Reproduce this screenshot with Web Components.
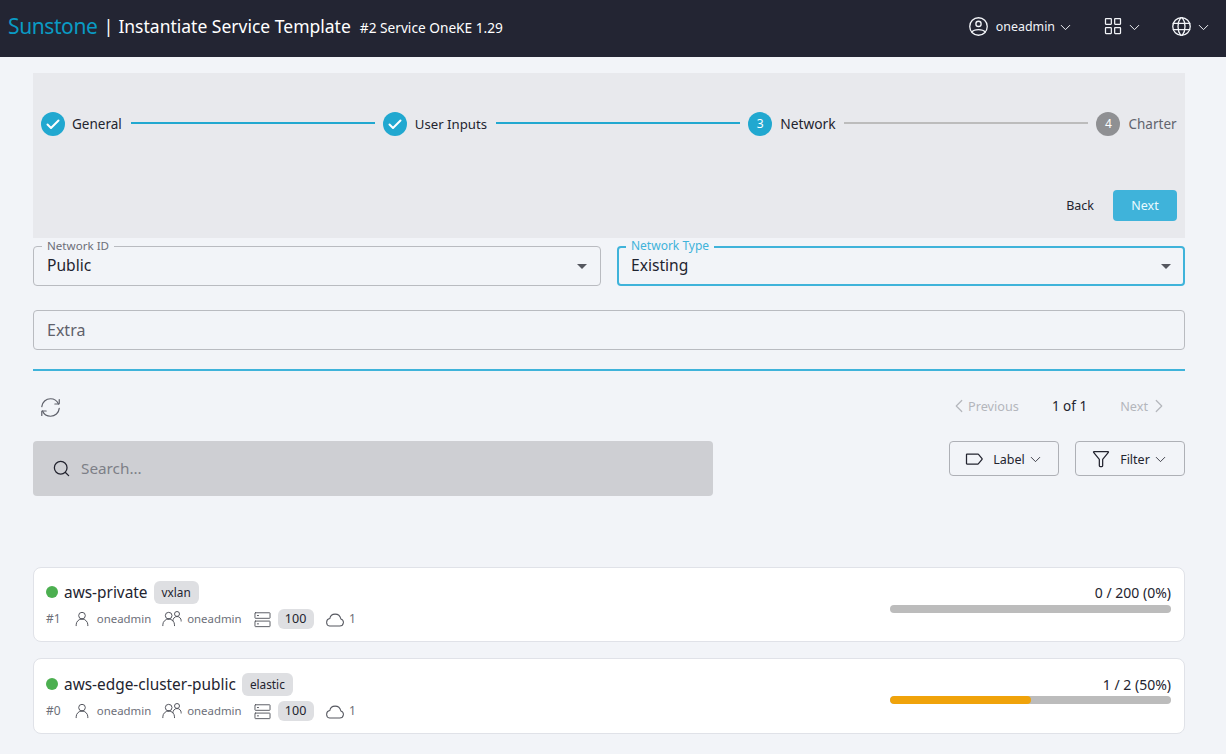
<!DOCTYPE html>
<html lang="en"><head><meta charset="utf-8"><title>Sunstone</title>
<style>
html,body{margin:0;height:100%;background:#f2f4f8;overflow:hidden}
body{font-family:"Noto Sans","Open Sans",sans-serif;color:#1f2430}
</style></head><body>
<sun-app></sun-app>
<script>
const P={
 profile:'<circle cx="12" cy="12" r="10"/><path d="M4.271 18.346S6.5 15.5 12 15.5s7.73 2.846 7.73 2.846M12 12a3 3 0 1 0 0-6 3 3 0 0 0 0 6Z"/>',
 grid:'<path d="M14 20.4v-5.8a.6.6 0 0 1 .6-.6h5.8a.6.6 0 0 1 .6.6v5.8a.6.6 0 0 1-.6.6h-5.8a.6.6 0 0 1-.6-.6ZM3 20.4v-5.8a.6.6 0 0 1 .6-.6h5.8a.6.6 0 0 1 .6.6v5.8a.6.6 0 0 1-.6.6H3.6a.6.6 0 0 1-.6-.6ZM14 9.4V3.6a.6.6 0 0 1 .6-.6h5.8a.6.6 0 0 1 .6.6v5.8a.6.6 0 0 1-.6.6h-5.8a.6.6 0 0 1-.6-.6ZM3 9.4V3.6a.6.6 0 0 1 .6-.6h5.8a.6.6 0 0 1 .6.6v5.8a.6.6 0 0 1-.6.6H3.6a.6.6 0 0 1-.6-.6Z"/>',
 globe:'<circle cx="12" cy="12" r="10"/><path d="M13 2.05S16 6 16 12s-3 9.95-3 9.95M11 21.95S8 18 8 12s3-9.95 3-9.95M2.63 15.5h18.74M2.63 8.5h18.74"/>',
 down:'<path d="M6 9l6 6 6-6"/>',left:'<path d="M15 6l-6 6 6 6"/>',right:'<path d="M9 6l6 6-6 6"/>',
 refresh:'<path d="M21.168 8A10.003 10.003 0 0 0 12 2C6.815 2 2.55 5.947 2.05 11"/><path d="M17 8h4.4a.6.6 0 0 0 .6-.6V3"/><path d="M2.881 16c1.544 3.532 5.068 6 9.168 6 5.186 0 9.45-3.947 9.951-9"/><path d="M7.05 16h-4.4a.6.6 0 0 0-.6.6V21"/>',
 label:'<path d="M3 17.4V6.6a.6.6 0 0 1 .6-.6h13.079a.6.6 0 0 1 .456.21l4.534 5.4a.6.6 0 0 1 0 .78l-4.534 5.4a.6.6 0 0 1-.456.21H3.6a.6.6 0 0 1-.6-.6Z"/>',
 filter:'<path d="M3.6 3h16.8a.6.6 0 0 1 .46.98L14 12.5V20a1 1 0 0 1-1 1h-2a1 1 0 0 1-1-1v-7.5L3.14 3.98A.6.6 0 0 1 3.6 3Z"/>',
 search:'<path d="M17 17l4 4M3 11a8 8 0 1 0 16 0 8 8 0 0 0-16 0Z"/>',
 user:'<path d="M5 20v-1a7 7 0 0 1 14 0v1M12 12a4 4 0 1 0 0-8 4 4 0 0 0 0 8Z"/>',
 group:'<path d="M1 20v-1a7 7 0 0 1 14 0v1M13 14a5 5 0 0 1 10 0v.5M8 12a4 4 0 1 0 0-8 4 4 0 0 0 0 8ZM18 9a3 3 0 1 0 0-6 3 3 0 0 0 0 6Z"/>',
 server:'<rect x="2.500" y="3.500" width="19" height="7" rx=".6"/><rect x="2.500" y="14" width="19" height="7" rx=".6"/><path d="M5.500 7h1.500M5.500 17.500h1.500"/>',
 cloud:'<path d="M13 6c-3.2 0-5.7 2.200-6.200 5.200A4.500 4.500 0 0 0 6.500 20h12a4.300 4.300 0 0 0 1.200-8.400C19 8.400 16.300 6 13 6Z"/>',
 check:'<path d="M6.500 12.500l3.500 3.500 7.500-7.500"/>'
};
const svg=(n,s=24,sw=1.5,x='')=>`<svg xmlns="http://www.w3.org/2000/svg" width="${s}" height="${s}" viewBox="0 0 24 24" fill="none" stroke="currentColor" stroke-width="${sw}" stroke-linecap="round" stroke-linejoin="round" style="display:block;flex:none;${x}">${P[n]}</svg>`;
class Base extends HTMLElement{
 constructor(){super();this.attachShadow({mode:'open'})}
 connectedCallback(){this.shadowRoot.innerHTML=this.view()}
 a(n,d=''){return this.getAttribute(n)??d}
}
const def=(n,v)=>customElements.define(n,class extends Base{view(){return v.call(this)}});

def('sun-header',()=>`<style>
:host{display:flex;align-items:center;height:57px;background:#232533;color:#fff;padding:0 14px 5px 8px;box-sizing:border-box}
.brand{font-size:21px;letter-spacing:-.4px;color:#0a9bc4;line-height:1}
.sep{font-size:18px;margin:0 5px 0 6px}
h1{font:inherit;font-size:17.500px;margin:0;font-weight:400}
.sub{font-size:13.700px;margin-left:9px;position:relative;top:1px}
.sp{flex:1}
.m{display:flex;align-items:center;color:#f2f4f8}
.m span{font-size:12.400px;margin:0 2px 0 7px}
</style>
<span class="brand">Sunstone</span><span class="sep">|</span><h1>Instantiate Service Template</h1><span class="sub">#2 Service OneKE 1.29</span><span class="sp"></span>
<div class="m">${svg('profile',21)}<span>oneadmin</span>${svg('down',17,1.4,'position:relative;top:1px')}</div>
<div class="m" style="margin-left:29px">${svg('grid',20)}${svg('down',17,1.4,'position:relative;top:1px;margin-left:3px')}</div>
<div class="m" style="margin-left:28px">${svg('globe',21)}${svg('down',17,1.4,'position:relative;top:1px;margin-left:3px')}</div>`);

def('sun-step',function(){const st=this.a('state');const on=st!=='todo';return `<style>
:host{display:flex;align-items:center;flex:none;gap:${this.a('g',7)}px;font-size:${this.a('fs',13.5)}px;line-height:24px;color:${on?'#23242f':'#62646e'}}
i{width:24px;height:24px;border-radius:50%;background:${on?'#21a8d0':'#8f9093'};color:#fff;font:normal 12px/24px "Noto Sans",sans-serif;text-align:center;display:block}
b{font-weight:400;display:block;width:${this.a('w')}px;white-space:nowrap}
</style><i>${st==='done'?svg('check',24,2):this.a('n')}</i><b><slot></slot></b>`});
def('sun-link',function(){return `<style>:host{display:block;flex:1;height:2px;margin:0 8px;position:relative;top:-1px;background:${this.hasAttribute('on')?'#21a8d0':'#bcbcbc'}}</style>`});

def('sun-stepper',()=>`<style>
:host{display:block;background:#e8e9ed;padding:39px 8px 17px}
.s{display:flex;align-items:center}
.a{display:flex;justify-content:flex-end;align-items:center;margin-top:54px;font-size:12.500px}
.back{color:#23242f;margin-right:19px}
.next{width:64px;height:31px;line-height:31px;text-align:center;background:#3fb3da;color:#eafaff;border-radius:4px}
</style><div class="s">
<sun-step state="done" w="50.500">General</sun-step><sun-link on></sun-link>
<sun-step state="done" w="73" g="8" fs="13.200">User Inputs</sun-step><sun-link on></sun-link>
<sun-step state="cur" n="3" w="56" g="8" fs="13.800">Network</sun-step><sun-link></sun-link>
<sun-step state="todo" n="4" w="48.500" g="8">Charter</sun-step>
</div><div class="a"><span class="back">Back</span><span class="next">Next</span></div>`);

def('sun-field',function(){const f=this.hasAttribute('focus'),sel=this.hasAttribute('select'),l=this.a('label');const c=f?'#3fb3da':'#b9bbc0';return `<style>
:host{display:block;flex:1 1 50%;min-width:0;position:relative;height:40px;box-sizing:border-box;border:${f?2:1}px solid ${c};border-radius:4px;font-size:${l?15.6:16}px}
.v{position:absolute;left:${f?12:13}px;top:${l?(f?6:7):8}px;line-height:22px;color:${l?'#1f2430':'#5f616b'}}
.l{position:absolute;left:${f?7:8}px;top:${f?-9:-8}px;padding:0 5px;background:#f2f4f8;font-size:${f?12:11.6}px;line-height:14px;color:${f?'#3fb3da':'#6d6f79'}}
.c{position:absolute;right:${f?12:13}px;top:${f?16:17}px;width:0;height:0;border:5px solid transparent;border-top-color:#55575f;border-bottom:0}
</style>${l?`<span class="l">${l}</span>`:''}<span class="v"><slot></slot></span>${sel?'<span class="c"></span>':''}`});

def('sun-pager',()=>`<style>
:host{display:flex;align-items:center;height:36px;padding-left:7px;padding-right:15px}
.sp{flex:1}.d{display:flex;align-items:center;color:#b4b6bc;font-size:12.700px;position:relative;top:-1px}
.c{font-size:13.500px;color:#23242f;margin:0 33px 0 33px;position:relative;top:-1px}
</style>${svg('refresh',21,1.4,'color:#5f616b')}<span class="sp"></span>
<div class="d">${svg('left',22,1.3,'margin-right:-2px')}<span>Previous</span></div><span class="c">1 of 1</span>
<div class="d"><span>Next</span>${svg('right',22,1.3)}</div>`);

def('sun-btn',function(){return `<style>
:host{display:flex;align-items:center;justify-content:center;width:110px;height:35px;box-sizing:border-box;border:1px solid #aeb0b6;border-radius:4px;font-size:12.500px;color:#23242f;gap:9px}
.t{position:relative;top:1px}
.d{margin-left:-7px;position:relative;top:1px}
</style>${svg(this.a('icon'),20,1.5)}<span class="t"><slot></slot></span><span class="d">${svg('down',17,1.2)}</span>`});

def('sun-search',()=>`<style>
:host{display:flex;align-items:center;width:680px;height:55px;background:#cecfd3;border-radius:4px;padding-left:19px;box-sizing:border-box;gap:10px;color:#23242f}
span{font-size:15.300px;color:#7d7f87;position:relative;top:-1px}
</style>${svg('search',19,1.6)}<span>Search...</span>`);

def('sun-controls',()=>`<style>
:host{display:flex;align-items:flex-start;gap:16px;height:55px}.sp{flex:1}
</style><sun-search></sun-search><span class="sp"></span><sun-btn icon="label">Label</sun-btn><sun-btn icon="filter">Filter</sun-btn>`);

def('sun-card',function(){const p=+this.a('pct',0),h=+this.a('h',75),o=h-75;return `<style>
:host{display:flex;background:#fff;border:1px solid #e0e2e8;border-radius:8px;box-sizing:border-box;height:${h}px;padding:12px 13px 0 12px;justify-content:space-between}
.l{padding-top:${o}px}
.t{display:flex;align-items:center;height:24px}
.dot{width:12px;height:12px;border-radius:50%;background:#4caf50;margin-right:6px}
.n{font-size:15.400px;color:#23242f;line-height:24px;position:relative;top:.5px}
.tag{font-size:11.800px;background:#dedfe2;color:#23242f;border-radius:6px;height:23px;line-height:23px;padding:0 8px;margin-left:6px}
.m{display:flex;align-items:center;height:20px;margin-top:5px;font-size:11.400px;color:#6d6f79}
.m svg{color:#55575f}
.m .x{position:relative;top:-1px}
.chip{background:#dedfe2;color:#23242f;border-radius:6px;height:20px;line-height:20px;width:36px;text-align:center;margin:0 10px 0 5.500px;font-size:12.500px}
.r{width:281px;text-align:right;font-size:14px;color:#23242f;line-height:20px;padding-top:${3+o}px}
.b{height:8px;border-radius:4px;background:#bcbcbc;overflow:hidden;margin-top:${2-o}px}
.b i{display:block;height:100%;width:${p}%;background:#f0a30a;border-radius:4px}
</style><div class="l"><div class="t"><span class="dot"></span><span class="n">${this.a('name')}</span><span class="tag">${this.a('type')}</span></div>
<div class="m"><span class="x" style="width:25.800px;font-size:12px">#${this.a('id')}</span>${svg('user',20,1.2)}<span class="x" style="margin:0 11px 0 5px">oneadmin</span>${svg('group',20,1.2)}<span class="x" style="margin:0 11.500px 0 5px">oneadmin</span>${svg('server',19,1.2)}<span class="chip">100</span>${svg('cloud',20.500,1.2)}<span class="x" style="margin-left:5px;font-size:12px">1</span></div></div>
<div class="r">${this.a('use')}<div class="b"><i></i></div></div>`});

def('sun-app',()=>`<style>
:host{display:block}
main{display:block;padding:16px 41px 0 33px}
.row{display:flex;gap:16px;margin-top:8px}
.ex{display:flex;margin-top:24px}
hr{border:0;height:2px;background:#3fb3da;margin:19px 0 18px}
sun-controls{margin-top:16px}
sun-card{margin-top:16px}
sun-card.first{margin-top:71px}
</style><sun-header></sun-header><main>
<sun-stepper></sun-stepper>
<div class="row"><sun-field select label="Network ID">Public</sun-field><sun-field select focus label="Network Type">Existing</sun-field></div>
<div class="ex"><sun-field>Extra</sun-field></div>
<hr>
<sun-pager></sun-pager>
<sun-controls></sun-controls>
<sun-card class="first" name="aws-private" type="vxlan" id="1" use="0 / 200 (0%)" pct="0"></sun-card>
<sun-card h="76" name="aws-edge-cluster-public" type="elastic" id="0" use="1 / 2 (50%)" pct="50"></sun-card>
</main>`);
</script></body></html>
